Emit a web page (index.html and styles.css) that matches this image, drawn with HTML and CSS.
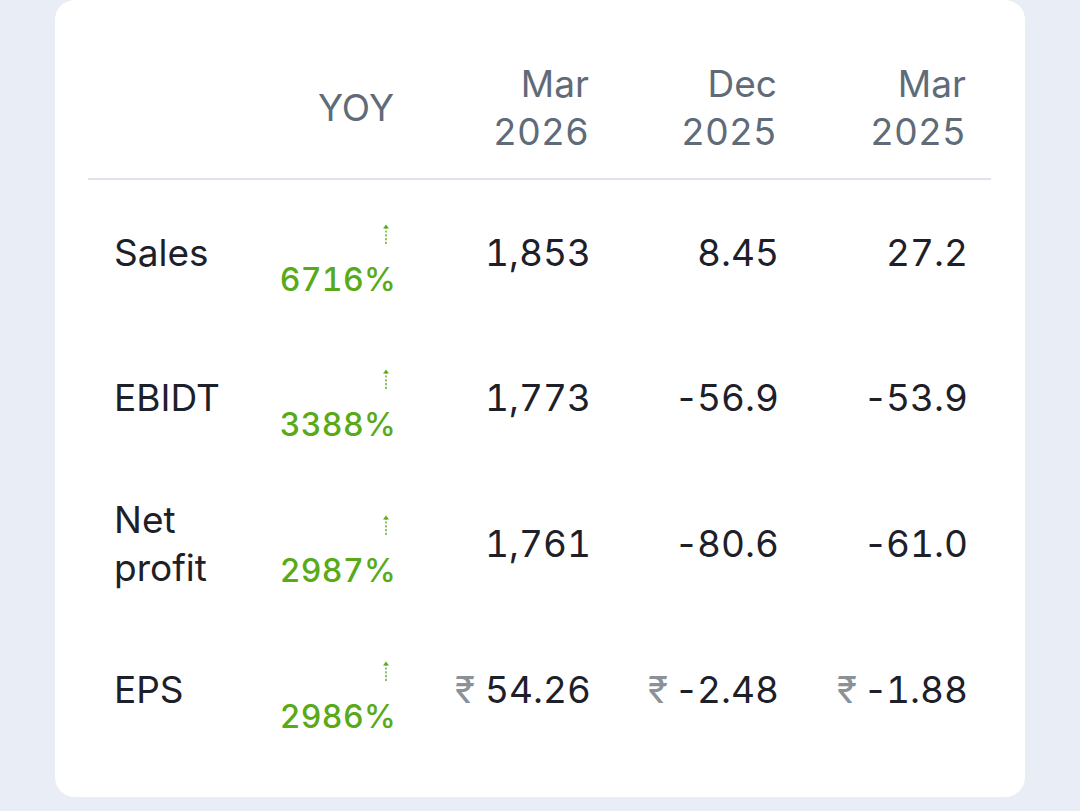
FILE: index.html
```html
<!DOCTYPE html>
<html lang="en">
<head>
<meta charset="utf-8">
<title>Quarterly results</title>
<link rel="stylesheet" href="styles.css">
</head>
<body>
<div class="card">
  <table class="results">
    <colgroup>
      <col class="c-label"><col class="c-yoy"><col class="c-q1"><col class="c-q2"><col class="c-q3">
    </colgroup>
    <thead>
      <tr>
        <th class="label"></th>
        <th>YOY</th>
        <th>Mar<br>2026</th>
        <th>Dec<br>2025</th>
        <th>Mar<br>2025</th>
      </tr>
    </thead>
    <tbody>
      <tr>
        <td class="label">Sales</td>
        <td class="yoy"><span class="arrow"><svg width="8" height="22" viewBox="0 0 8 22"><path d="M4 21V5" stroke="#5cad1e" stroke-width="1.4" stroke-dasharray="2.2 1.6" fill="none"/><path d="M1 5.5L4 1.5L7 5.5Z" fill="#5cad1e"/></svg></span><span class="pct">6716%</span></td>
        <td>1,853</td>
        <td>8.45</td>
        <td>27.2</td>
      </tr>
      <tr>
        <td class="label">EBIDT</td>
        <td class="yoy"><span class="arrow"><svg width="8" height="22" viewBox="0 0 8 22"><path d="M4 21V5" stroke="#5cad1e" stroke-width="1.4" stroke-dasharray="2.2 1.6" fill="none"/><path d="M1 5.5L4 1.5L7 5.5Z" fill="#5cad1e"/></svg></span><span class="pct">3388%</span></td>
        <td>1,773</td>
        <td><span class="sign">-</span>56.9</td>
        <td><span class="sign">-</span>53.9</td>
      </tr>
      <tr>
        <td class="label">Net profit</td>
        <td class="yoy"><span class="arrow"><svg width="8" height="22" viewBox="0 0 8 22"><path d="M4 21V5" stroke="#5cad1e" stroke-width="1.4" stroke-dasharray="2.2 1.6" fill="none"/><path d="M1 5.5L4 1.5L7 5.5Z" fill="#5cad1e"/></svg></span><span class="pct">2987%</span></td>
        <td>1,761</td>
        <td><span class="sign">-</span>80.6</td>
        <td><span class="sign">-</span>61.0</td>
      </tr>
      <tr>
        <td class="label">EPS</td>
        <td class="yoy"><span class="arrow"><svg width="8" height="22" viewBox="0 0 8 22"><path d="M4 21V5" stroke="#5cad1e" stroke-width="1.4" stroke-dasharray="2.2 1.6" fill="none"/><path d="M1 5.5L4 1.5L7 5.5Z" fill="#5cad1e"/></svg></span><span class="pct">2986%</span></td>
        <td><span class="cur">₹</span> 54.26</td>
        <td><span class="cur">₹</span> <span class="sign">-</span>2.48</td>
        <td><span class="cur">₹</span> <span class="sign">-</span>1.88</td>
      </tr>
    </tbody>
  </table>
</div>
</body>
</html>
```
FILE: styles.css
```css
html, body {
  margin: 0;
  padding: 0;
  background: #e9edf5;
  height: 100%;
}
body {
  font-family: Inter, "Noto Sans", sans-serif;
  color: #1e2029;
}
.card {
  margin-left: 55px;
  width: 970px;
  height: 797px;
  box-sizing: border-box;
  background: #ffffff;
  border-radius: 20px;
  padding: 0 34px 0 33px;
}
.results {
  width: 903px;
  border-collapse: collapse;
  table-layout: fixed;
  font-size: 37px;
  line-height: 48px;
  font-variant-numeric: tabular-nums;
}
.c-label { width: 170px; }
.c-yoy { width: 161px; }
.c-q1 { width: 195px; }
.c-q2 { width: 188px; }
.c-q3 { width: 189px; }
.results th {
  font-weight: 400;
  color: #5f6b79;
  text-align: right;
  padding: 60px 25px 22px 0;
  border-bottom: 2px solid #dfe4ea;
  vertical-align: middle;
}
.results tbody tr {
  height: 146px;
}
.results td {
  padding: 0 23px 0 0;
  text-align: right;
  vertical-align: middle;
}
.results .label {
  text-align: left;
  padding-left: 26px;
  padding-right: 0;
}
.results td.yoy {
  vertical-align: top;
  padding-top: 43px;
  padding-right: 25px;
  line-height: 1;
}
.yoy .arrow {
  display: block;
  height: 22px;
  padding-right: 4px;
}
.yoy .arrow svg {
  display: block;
  margin-left: auto;
}
.pct {
  display: block;
  color: #58aa18;
  font-size: 32px;
  font-weight: 500;
  letter-spacing: 0.3px;
  line-height: 40px;
  margin-top: 15px;
  margin-right: -2px;
}
.sign {
  font-variant-numeric: normal;
  margin-right: 2px;
}
.cur {
  color: #8a9198;
}
```
